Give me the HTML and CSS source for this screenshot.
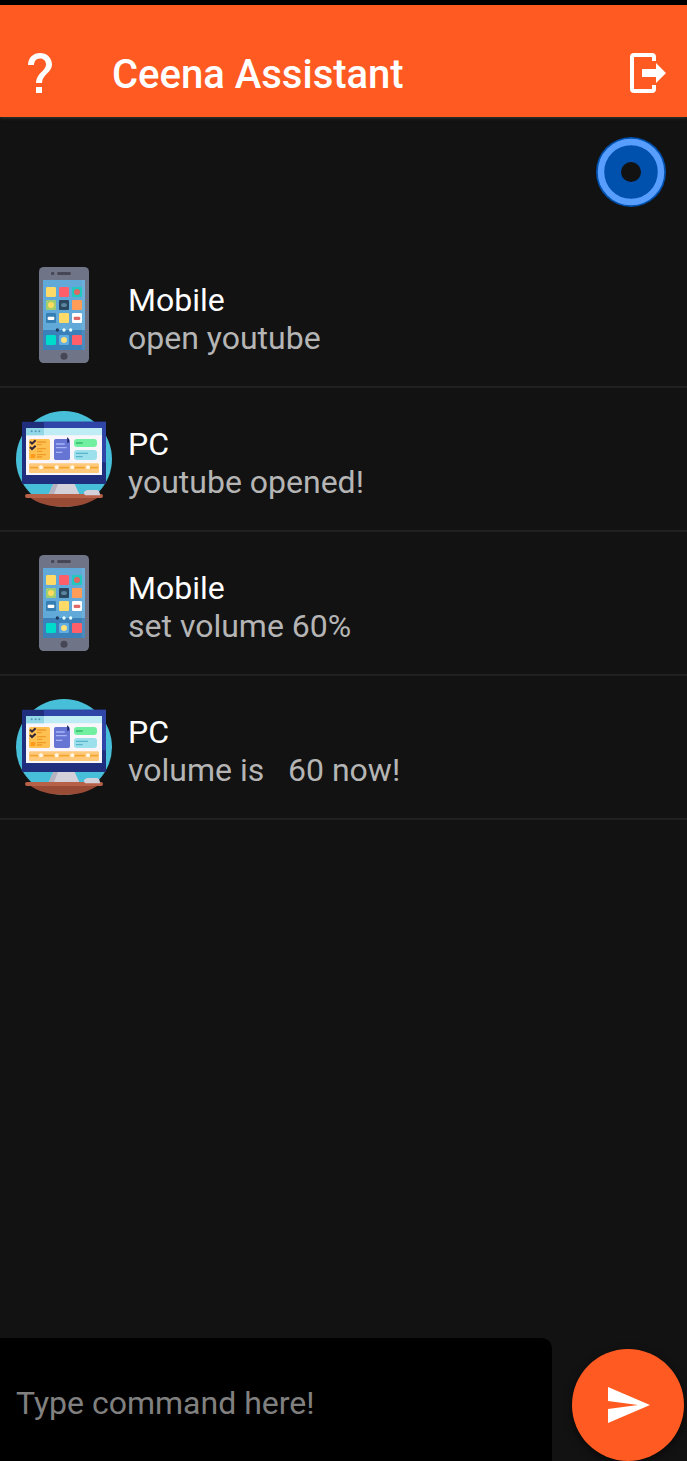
FILE: index.html
```html
<!DOCTYPE html>
<html lang="en">
<head>
<meta charset="utf-8">
<title>Ceena Assistant</title>
<link rel="stylesheet" href="styles.css">
</head>
<body>
<svg class="defs" width="0" height="0" aria-hidden="true">
  <symbol id="mobile" viewBox="-24 21 288 288">
    <rect x="45" y="21" width="150" height="288" rx="14" fill="#707487"/>
    <rect x="57" y="60" width="126" height="210" fill="#60a9d8"/>
    <path d="M57 210h126v60H57z" fill="#3c80b9"/>
    <path d="M173 60h10v210h-10z" fill="#fff" opacity=".08"/>
    <rect x="81" y="36" width="10" height="9" rx="4" fill="#464655"/>
    <rect x="99" y="36" width="42" height="9" rx="4.500" fill="#464655"/>
    <circle cx="120" cy="289" r="10.500" fill="#464655"/>
    <rect x="66" y="81" width="30" height="30" rx="4" fill="#ffda67"/>
    <rect x="105" y="81" width="30" height="30" rx="4" fill="#ff5f69"/>
    <rect x="144" y="81" width="30" height="30" rx="4" fill="#21c8bd"/>
    <circle cx="159" cy="96" r="9" fill="#df6863"/>
    <rect x="66" y="120" width="30" height="30" rx="4" fill="#a0cf72"/>
    <circle cx="81" cy="135" r="9" fill="#ffdc60"/>
    <rect x="105" y="120" width="30" height="30" rx="4" fill="#29475e"/>
    <ellipse cx="120" cy="135" rx="9" ry="6" fill="#5b829f"/>
    <rect x="144" y="120" width="30" height="30" rx="4" fill="#ff9d58"/>
    <rect x="66" y="159" width="30" height="30" rx="4" fill="#367fb5"/>
    <rect x="71" y="170" width="20" height="10" rx="3" fill="#fff"/>
    <rect x="105" y="159" width="30" height="30" rx="4" fill="#ffda67"/>
    <rect x="144" y="159" width="30" height="30" rx="4" fill="#fff"/>
    <rect x="149" y="170" width="20" height="10" rx="4" fill="#df6868"/>
    <circle cx="100" cy="210" r="5" fill="#203c60"/>
    <circle cx="120" cy="210" r="5" fill="#e5ffff"/>
    <circle cx="140" cy="210" r="5" fill="#e5ffff"/>
    <rect x="66" y="225" width="30" height="30" rx="4" fill="#00dccc"/>
    <rect x="105" y="225" width="30" height="30" rx="4" fill="#5faee3"/>
    <circle cx="120" cy="240" r="9" fill="#ffe17b"/>
    <rect x="144" y="225" width="30" height="30" rx="4" fill="#ff5f69"/>
  </symbol>
  <symbol id="pc" viewBox="24 21 288 288">
    <circle cx="168" cy="165" r="144" fill="#48bfd9"/>
    <path d="M64 279h208c-28 20-62 30-104 30S88 298 64 279z" fill="#994b36"/>
    <path d="M42 53h252v187H42z" fill="#202f7d"/>
    <path d="M108 53h186v122h-12V72H108z" fill="#3045a8"/>
    <path d="M54 72h228v141H54z" fill="#f8f6fa"/>
    <path d="M54 72h228v22H54z" fill="#c0edf5"/>
    <path d="M54 72h54v22H54z" fill="#94d8e8"/>
    <g fill="#5295b5"><circle cx="71" cy="82" r="3"/><circle cx="83" cy="82" r="3"/><circle cx="94" cy="82" r="3"/></g>
    <rect x="63" y="105" width="63" height="63" rx="5" fill="#ffc052"/>
    <path d="M87 114h27m-27 8h14m-14 12h27m-27 8h16m-16 10h27m-27 7h16" transform="translate(0 0)" stroke="#ef9b26" stroke-width="4"/>
    <path d="M68 150h14v12H68z" fill="#ff9b1c"/>
    <path d="M66 113l6 6 11-10m-17 20l6 6 11-10" fill="none" stroke="#30263b" stroke-width="6"/>
    <rect x="138" y="105" width="48" height="63" rx="5" fill="#6675d4"/>
    <path d="M144 120h26m-26 11h32m-32 14h19" stroke="#a8b2f4" stroke-width="4"/>
    <path d="M177 99l6 6v10l-5 3z" fill="#232868"/>
    <rect x="198" y="105" width="69" height="24" rx="9" fill="#72efa1"/>
    <path d="M204 117h20" stroke="#38bd73" stroke-width="5"/>
    <rect x="198" y="138" width="69" height="30" rx="9" fill="#9be0ec"/>
    <path d="M204 148h36m-36 10h20" stroke="#58b5c9" stroke-width="4"/>
    <rect x="63" y="178" width="210" height="29" rx="4" fill="#ffc97b"/>
    <path d="M66 191h24m18 0h32m13 0h30m16 0h32m15 0h24" stroke="#f5a52c" stroke-width="5"/>
    <g fill="#fff8e9"><circle cx="99" cy="190" r="6"/><circle cx="146" cy="190" r="6"/><circle cx="193" cy="190" r="6"/><circle cx="240" cy="190" r="6"/></g>
    <path d="M136 240h64l14 31h-92z" fill="#d4d0da"/>
    <path d="M136 240h14l-12 31h-16z" fill="#b7b1bf"/>
    <rect x="51" y="270" width="234" height="12" rx="6" fill="#b76149"/>
    <path d="M228 267c0-5 5-8 12-9h24c8 0 12 5 12 16h-40c-5 0-8-2-8-7z" fill="#d5d1db"/>
  </symbol>
</svg>
<main class="app">
  <header class="bar">
    <svg class="bar-icon" viewBox="0 0 48 48" aria-label="Help"><path fill="#fff" d="M20 38h6v6h-6zM12 16c0-7.200 5.200-12 12-12s12 4.800 12 11.500c0 8-10 10-10 18.500h-6c0-9.800 10-12 10-18.500 0-3.500-2.500-6-6-6s-6 2.800-6 6.500z"/></svg>
    <h1 class="title">Ceena Assistant</h1>
    <svg class="bar-icon" viewBox="0 0 48 48" aria-label="Sign out"><path fill="#fff" d="M11 4h18a4 4 0 0 1 4 4v4h-4V8H11v32h18v-4h4v4a4 4 0 0 1-4 4H11a4 4 0 0 1-4-4V8a4 4 0 0 1 4-4zM19 20h14v-6l10 10-10 10v-6H19z"/></svg>
  </header>
  <div class="status">
    <svg class="orb" viewBox="0 0 70 70"><circle cx="35" cy="35" r="35" fill="#0050ad"/><circle cx="35" cy="35" r="30" fill="none" stroke="#589eff" stroke-width="6.500"/><circle cx="35" cy="35" r="10" fill="#121212"/></svg>
  </div>
  <ul class="messages">
    <li class="message"><svg class="avatar"><use href="#mobile"/></svg><div><p class="sender">Mobile</p><p class="text">open youtube</p></div></li>
    <li class="message"><svg class="avatar"><use href="#pc"/></svg><div><p class="sender">PC</p><p class="text">youtube opened!</p></div></li>
    <li class="message"><svg class="avatar"><use href="#mobile"/></svg><div><p class="sender">Mobile</p><p class="text">set volume 60%</p></div></li>
    <li class="message"><svg class="avatar"><use href="#pc"/></svg><div><p class="sender">PC</p><p class="text">volume is   60 now!</p></div></li>
  </ul>
  <footer class="composer">
    <div class="field">Type command here!</div>
    <button class="send" aria-label="Send"><svg class="send-icon" viewBox="0 0 48 48"><path fill="#fff" d="M4 6l42 18L4 42V28l30-4-30-4z"/></svg></button>
  </footer>
</main>
</body>
</html>
```

FILE: styles.css
```css
* { box-sizing: border-box; margin: 0; padding: 0; }
body { background: #121212; font-family: Roboto, sans-serif; }
.defs { display: block; }
.app { display: flex; flex-direction: column; height: 1461px; border-top: 5px solid #000; overflow: hidden; }
.bar { display: flex; align-items: center; height: 112px; padding: 24px 16px 0; background: #ff5a22; box-shadow: 0 1px 3px #303a30; }
.bar-icon { width: 48px; height: 48px; }
.title { flex: 1; margin-left: 48px; padding-top: 4px; color: #fff; font-size: 40px; font-weight: 500; line-height: 48px; }
.status { display: flex; justify-content: flex-end; height: 127px; padding: 20px 21px 0; }
.orb { width: 70px; height: 70px; }
.messages { flex: 1; list-style: none; }
.message { display: flex; align-items: center; gap: 16px; height: 144px; padding-left: 16px; border-bottom: 2px solid #202020; }
.avatar { width: 96px; height: 96px; }
.sender, .text { font-size: 32px; line-height: 38px; white-space: pre; }
.sender { color: #fff; }
.text { color: #b5b5b5; }
.message div { padding-top: 8px; }
.composer { display: flex; justify-content: space-between; height: 123px; padding-right: 3px; }
.field { width: 552px; padding: 46px 16px 0; border-top-right-radius: 10px; background: #000; color: #808080; font-size: 32px; line-height: 38px; }
.send { display: flex; align-items: center; justify-content: center; width: 112px; height: 112px; margin-top: 11px; border: 0; border-radius: 50%; background: #ff5a22; box-shadow: 0 3px 9px rgb(0 0 0 / .55); }
.send-icon { width: 48px; height: 48px; }
```
